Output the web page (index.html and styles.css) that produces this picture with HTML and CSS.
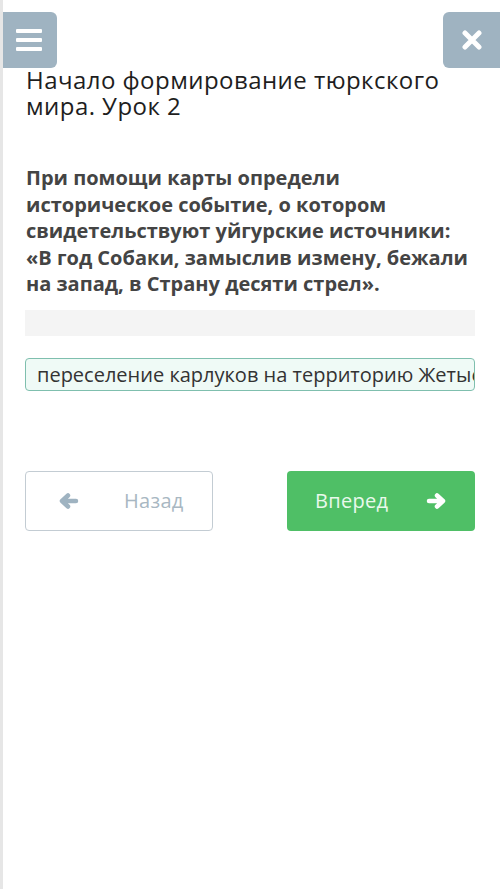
FILE: index.html
```html
<!DOCTYPE html>
<html lang="ru">
  <head>
    <meta charset="UTF-8" />
    <meta name="viewport" content="width=device-width, initial-scale=1.0" />
    <title>Урок</title>
    <link rel="stylesheet" href="styles.css">
  </head>
  <body>
    <!-- Top bar -->
    <header class="topbar">
      <button class="icon-btn menu-btn" aria-label="Меню">
        <svg width="26" height="22" viewBox="0 0 26 22">
          <rect x="0" y="0" width="26" height="4" rx="1" fill="#fff" />
          <rect x="0" y="9" width="26" height="4" rx="1" fill="#fff" />
          <rect x="0" y="18" width="26" height="4" rx="1" fill="#fff" />
        </svg>
      </button>
      <button class="icon-btn close-btn" aria-label="Закрыть">
        <svg width="20" height="20" viewBox="0 0 20 20">
          <path d="M3 3 L17 17 M17 3 L3 17" stroke="#fff" stroke-width="5" stroke-linecap="round" />
        </svg>
      </button>
    </header>

    <!-- Main content -->
    <main class="content">
      <h1 class="title">Начало формирование тюркского<br>мира. Урок 2</h1>

      <p class="question">
        При помощи карты определи<br>
        историческое событие, о котором<br>
        свидетельствуют уйгурские источники:<br>
        «В год Собаки, замыслив измену, бежали<br>
        на запад, в Страну десяти стрел».
      </p>

      <div class="drop-zone"></div>

      <div class="answer">переселение карлуков на территорию Жетысу</div>

      <div class="nav-buttons">
        <button class="btn btn-back">
          <svg width="20" height="16" viewBox="0 0 20 16">
            <path d="M9 2.5 L3 8 L9 13.5 M3 8 H17" stroke="#9fb3c1" stroke-width="4.5" fill="none" stroke-linecap="round" stroke-linejoin="round" />
          </svg>
          <span>Назад</span>
        </button>
        <button class="btn btn-next">
          <span>Вперед</span>
          <svg width="20" height="16" viewBox="0 0 20 16">
            <path d="M11 2.5 L17 8 L11 13.5 M17 8 H3" stroke="#fff" stroke-width="4.5" fill="none" stroke-linecap="round" stroke-linejoin="round" />
          </svg>
        </button>
      </div>
    </main>
  </body>
</html>
```

FILE: styles.css
```css
body {
  margin: 0;
  font-family: "Open Sans", "Noto Sans", sans-serif;
  background-color: #fff;
  border-left: 3px solid #e6e6e6;
  min-height: 889px;
  box-sizing: border-box;
}

.topbar {
  display: flex;
  justify-content: space-between;
  padding-top: 12px;
  margin-left: -3px;
}

.icon-btn {
  width: 57px;
  height: 56px;
  border: none;
  background-color: #9fb3c1;
  display: flex;
  align-items: center;
  justify-content: center;
  padding: 0;
}

.menu-btn {
  border-radius: 0 6px 6px 0;
}

.close-btn {
  border-radius: 6px 0 0 6px;
}

.content {
  padding: 0 25px 0 22px;
}

.title {
  font-size: 24px;
  font-weight: 400;
  line-height: 26px;
  letter-spacing: 0.45px;
  color: #1e1e1e;
  margin: -1px 0 0 1px;
}

.question {
  font-size: 20px;
  font-weight: 700;
  line-height: 26.5px;
  color: #444;
  margin: 46px 0 0 1px;
  white-space: nowrap;
}

.drop-zone {
  height: 26px;
  background-color: #f4f4f4;
  margin-top: 12px;
}

.answer {
  margin-top: 22px;
  height: 31px;
  line-height: 31px;
  border: 1px solid #7fbfae;
  border-radius: 4px;
  background-color: #effaf6;
  color: #333;
  font-size: 20px;
  padding-left: 11px;
  white-space: nowrap;
  overflow: hidden;
}

.nav-buttons {
  display: flex;
  justify-content: space-between;
  margin-top: 80px;
}

.btn {
  width: 188px;
  height: 60px;
  border-radius: 4px;
  font-family: "Open Sans", "Noto Sans", sans-serif;
  font-size: 20px;
  letter-spacing: 0.3px;
  display: flex;
  align-items: center;
  padding: 0;
}

.btn-back {
  background-color: #fff;
  border: 1px solid #c3ccd3;
  color: #a8b7c2;
}

.btn-back svg {
  margin-left: 33px;
}

.btn-back span {
  margin-left: 45px;
}

.btn-next {
  background-color: #4fbf66;
  border: none;
  color: #e9f9ec;
}

.btn-next span {
  margin-left: 28px;
}

.btn-next svg {
  margin-left: 38px;
}
```
